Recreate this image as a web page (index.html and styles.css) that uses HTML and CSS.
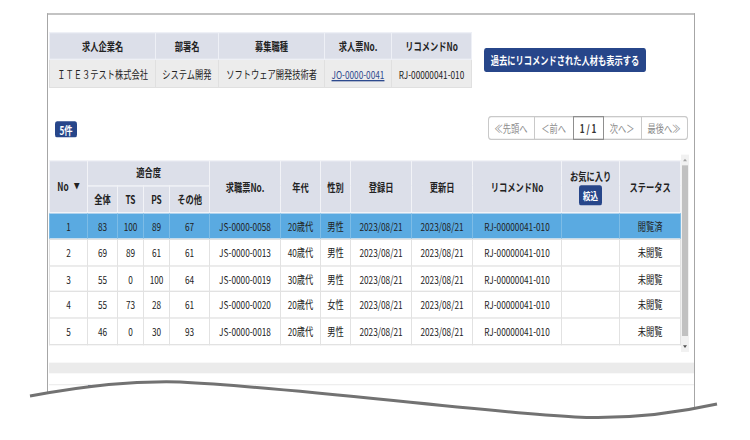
FILE: index.html
```html
<!DOCTYPE html>
<html lang="ja">
<head>
<meta charset="utf-8">
<title>リコメンド一覧</title>
<link rel="stylesheet" href="styles.css">
</head>
<body>
<div class="canvas">
  <div class="frame">
    <div class="top">
      <table class="info">
        <colgroup>
          <col class="i-company"><col class="i-dept"><col class="i-job"><col class="i-no"><col class="i-rec">
        </colgroup>
        <thead>
          <tr><th>求人企業名</th><th>部署名</th><th>募集職種</th><th>求人票No.</th><th>リコメンドNo</th></tr>
        </thead>
        <tbody>
          <tr><td>ＩＴＥ３テスト株式会社</td><td>システム開発</td><td>ソフトウェア開発技術者</td><td><a class="link" href="#">JO-0000-0041</a></td><td>RJ-00000041-010</td></tr>
        </tbody>
      </table>
      <button class="btn-past" type="button">過去にリコメンドされた人材も表示する</button>
    </div>

    <div class="toolbar">
      <span class="count">5件</span>
      <div class="pager">
        <span class="pg pg-first">≪先頭へ</span>
        <span class="pg pg-prev">＜前へ</span>
        <span class="pg pg-cur">1 / 1</span>
        <span class="pg pg-next">次へ＞</span>
        <span class="pg pg-last">最後へ≫</span>
      </div>
    </div>

    <div class="grid-wrap">
      <table class="grid">
        <colgroup>
          <col class="c-no"><col class="c-all"><col class="c-ts"><col class="c-ps"><col class="c-oth">
          <col class="c-js"><col class="c-age"><col class="c-sex"><col class="c-reg"><col class="c-upd">
          <col class="c-rec"><col class="c-fav"><col class="c-st">
        </colgroup>
        <thead>
          <tr class="h1">
            <th rowspan="2">No<span class="sort">▼</span></th>
            <th colspan="4">適合度</th>
            <th rowspan="2">求職票No.</th>
            <th rowspan="2">年代</th>
            <th rowspan="2">性別</th>
            <th rowspan="2">登録日</th>
            <th rowspan="2">更新日</th>
            <th rowspan="2">リコメンドNo</th>
            <th rowspan="2"><div class="fav">お気に入り<span class="btn-filter">絞込</span></div></th>
            <th rowspan="2">ステータス</th>
          </tr>
          <tr class="h2">
            <th>全体</th><th>TS</th><th>PS</th><th>その他</th>
          </tr>
        </thead>
        <tbody>
          <tr class="selected"><td>1</td><td>83</td><td>100</td><td>89</td><td>67</td><td>JS-0000-0058</td><td>20歳代</td><td>男性</td><td>2023/08/21</td><td>2023/08/21</td><td>RJ-00000041-010</td><td></td><td>閲覧済</td></tr>
          <tr><td>2</td><td>69</td><td>89</td><td>61</td><td>61</td><td>JS-0000-0013</td><td>40歳代</td><td>男性</td><td>2023/08/21</td><td>2023/08/21</td><td>RJ-00000041-010</td><td></td><td>未閲覧</td></tr>
          <tr><td>3</td><td>55</td><td>0</td><td>100</td><td>64</td><td>JS-0000-0019</td><td>30歳代</td><td>男性</td><td>2023/08/21</td><td>2023/08/21</td><td>RJ-00000041-010</td><td></td><td>未閲覧</td></tr>
          <tr><td>4</td><td>55</td><td>73</td><td>28</td><td>61</td><td>JS-0000-0020</td><td>20歳代</td><td>女性</td><td>2023/08/21</td><td>2023/08/21</td><td>RJ-00000041-010</td><td></td><td>未閲覧</td></tr>
          <tr><td>5</td><td>46</td><td>0</td><td>30</td><td>93</td><td>JS-0000-0018</td><td>20歳代</td><td>男性</td><td>2023/08/21</td><td>2023/08/21</td><td>RJ-00000041-010</td><td></td><td>未閲覧</td></tr>
        </tbody>
      </table>
      <div class="vscroll">
        <span class="arrow up"></span>
        <span class="thumb"></span>
        <span class="arrow down"></span>
      </div>
    </div>

    <div class="band"></div>
    <div class="foot"><span class="foot-block"></span></div>
  </div>
</div>

<svg class="tear" viewBox="0 0 750 440" width="750" height="440" aria-hidden="true">
  <path class="tear-fill" d="M30 396 C90 385 130 381 180 382 C300 388 460 410 575 417 C640 420 690 410 717 404 L750 404 L750 440 L0 440 L0 396 Z"/>
  <path class="tear-line" d="M30 396 C90 385 130 381 180 382 C300 388 460 410 575 417 C640 420 690 410 717 404"/>
</svg>
</body>
</html>
```

FILE: styles.css
```css
html, body {
  margin: 0;
  padding: 0;
  overflow: hidden;
  background: #fff;
}
body {
  position: relative;
  width: 750px;
  height: 440px;
  font-family: "Noto Sans CJK JP", "Noto Sans", sans-serif;
  font-size: 8.25px;
  color: #222;
}

/* The source screenshot is squeezed horizontally (glyphs are taller than wide).
   Layout uses real horizontal pixels and 3/4 of the vertical pixels,
   then the page is stretched vertically back to full height. */
.canvas {
  width: 750px;
  height: 330px;
  box-sizing: border-box;
  padding: 9.75px 0 0 47.25px;
  transform: scaleY(1.3333);
  transform-origin: 0 0;
}

.frame {
  width: 648px;
  height: 320px;
  box-sizing: border-box;
  border: 1.5px solid #a6a6a6;
  border-bottom: 0;
  padding: 12.75px 0 0 0.75px;
}

/* ---------- top info ---------- */
.top {
  display: flex;
  align-items: flex-start;
}
.info {
  border-collapse: collapse;
  table-layout: fixed;
  width: 422px;
}
.i-company { width: 106px; }
.i-dept { width: 63px; }
.i-job { width: 106px; }
.i-no { width: 67px; }
.i-rec { width: 80px; }
.info th,
.info td {
  padding: 0;
  text-align: center;
  white-space: nowrap;
  line-height: 10.5px;
}
.info th {
  height: 19.5px;
  background: #dcdfe9;
  font-weight: bold;
  border: 1px solid #eef0f6;
}
.info td {
  height: 19.5px;
  background: #ececec;
  border: 1px solid #e0e0e0;
}
.link {
  color: #2d4a8e;
  text-decoration: underline;
}
.btn-past {
  margin: 12.75px 0 0 12px;
  width: 162px;
  height: 18px;
  padding: 0;
  border: 0;
  border-radius: 2.5px;
  background: #27468a;
  color: #fff;
  font-family: inherit;
  font-size: 8.25px;
  font-weight: bold;
  line-height: 18px;
}

/* ---------- toolbar ---------- */
.toolbar {
  display: flex;
  align-items: center;
  justify-content: space-between;
  margin-top: 21px;
  padding: 0 6.75px 0 6px;
  height: 18px;
}
.count {
  display: inline-block;
  margin-top: 3px;
  width: 22px;
  height: 12.75px;
  line-height: 12.75px;
  text-align: center;
  background: #27468a;
  color: #fff;
  font-weight: bold;
  border-radius: 2px;
}
.pager {
  display: flex;
  height: 18px;
}
.pg {
  display: flex;
  align-items: center;
  justify-content: center;
  box-sizing: border-box;
  height: 18px;
  border: 1px solid #c9c9c9;
  margin-left: -1px;
  color: #8c8c8c;
  background: #fff;
}
.pg-first { width: 47px; margin-left: 0; border-radius: 3px 0 0 3px; }
.pg-prev { width: 40px; }
.pg-cur {
  width: 31px;
  border-color: #8f8f8f;
  color: #333;
  font-weight: bold;
  position: relative;
}
.pg-next { width: 39px; }
.pg-last { width: 47px; border-radius: 0 3px 3px 0; }

/* ---------- grid ---------- */
.grid-wrap {
  display: flex;
  align-items: flex-start;
  margin-top: 11.25px;
}
.grid {
  margin-top: 3.75px;
  width: 631px;
  table-layout: fixed;
  border-collapse: collapse;
}
.c-no { width: 38px; }
.c-all { width: 30px; }
.c-ts { width: 26px; }
.c-ps { width: 26px; }
.c-oth { width: 40px; }
.c-js { width: 71px; }
.c-age { width: 40px; }
.c-sex { width: 30px; }
.c-reg { width: 61px; }
.c-upd { width: 61px; }
.c-rec { width: 89px; }
.c-fav { width: 58px; }
.c-st { width: 61px; }

.grid th,
.grid td {
  padding: 0;
  text-align: center;
  white-space: nowrap;
  line-height: 10.5px;
}
.grid th {
  background: #dcdfe9;
  font-weight: bold;
  border: 1.5px solid #f2f3f7;
}
.h1 th { height: 18px; }
.h2 th { height: 19.5px; }
.sort {
  font-size: 6px;
  margin-left: 5px;
  vertical-align: 1px;
}
.fav {
  display: flex;
  flex-direction: column;
  align-items: center;
  gap: 2.25px;
  padding-top: 1.5px;
}
.btn-filter {
  display: block;
  width: 23px;
  height: 15px;
  line-height: 15px;
  background: #27468a;
  color: #fff;
  font-size: 7.5px;
  font-weight: bold;
  border-radius: 2px;
}
.grid td {
  height: 18.75px;
  background: #fff;
  border-left: 1px solid #e2e2e2;
  border-right: 1px solid #e2e2e2;
  border-bottom: 1.5px solid #e2e2e2;
}
.grid tr.selected td {
  background: #5aaae1;
  border-left-color: #7dbce6;
  border-right-color: #7dbce6;
}

.vscroll {
  display: flex;
  flex-direction: column;
  width: 8px;
  height: 148.5px;
  background: #f1f1f1;
}
.arrow {
  height: 8.25px;
  display: flex;
  align-items: center;
  justify-content: center;
}
.arrow::before {
  content: "";
  border-left: 2.5px solid transparent;
  border-right: 2.5px solid transparent;
}
.arrow.up::before { border-bottom: 2.25px solid #a3a3a3; }
.arrow.down::before { border-top: 2.25px solid #505050; }
.thumb {
  flex: 1;
  margin: 0 1px 3.75px;
  background: #c1c1c1;
}

.band {
  margin-top: 7.5px;
  height: 8.25px;
  background: #ebebeb;
}
.foot {
  margin-top: 8.25px;
  border-top: 1px solid #eeeeee;
  height: 8px;
}
.foot-block {
  display: block;
  margin-left: 39px;
  width: 18px;
  height: 6px;
  background: #27468a;
}

/* torn-paper edge overlay */
.tear {
  position: absolute;
  left: 0;
  top: 0;
  pointer-events: none;
}
.tear-fill { fill: #fff; }
.tear-line {
  fill: none;
  stroke: #727272;
  stroke-width: 3;
}
```
